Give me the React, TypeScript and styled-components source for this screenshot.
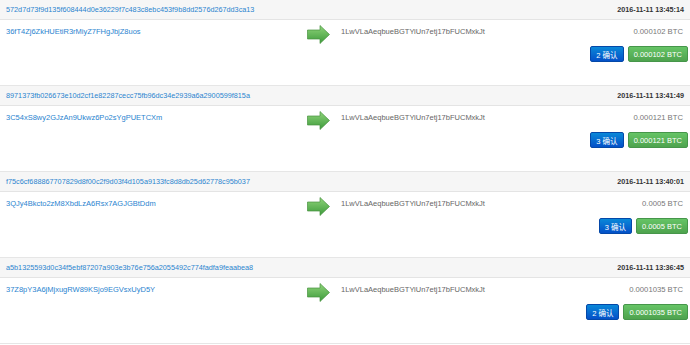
import styled, { createGlobalStyle } from "styled-components";

const GlobalStyle = createGlobalStyle`
  html, body {
    margin: 0;
    padding: 0;
    background: #fff;
    font-family: "Liberation Sans", Arial, "Noto Sans CJK SC", sans-serif;
  }
`;

const List = styled.div`
  width: 690px;
`;

const Tx = styled.div`
  border-bottom: 1px solid #e6e6e6;
`;

const TxHeader = styled.div`
  display: flex;
  justify-content: space-between;
  align-items: center;
  height: 19px;
  padding: 0 6px;
  background: #f6f6f6;
  border-bottom: 1px solid #e4e4e4;
`;

const Hash = styled.a`
  font-size: 7.25px;
  color: #2a84cf;
  text-decoration: none;
`;

const Time = styled.span`
  font-size: 7.2px;
  font-weight: bold;
  color: #333;
`;

const TxBody = styled.div`
  display: grid;
  grid-template-columns: 295px 40px 1fr;
  height: 65px;
  padding: 6px 2px 0 6px;
  box-sizing: border-box;
`;

const Address = styled.a`
  display: block;
  font-size: 7.5px;
  line-height: 12px;
  color: #2a84cf;
  text-decoration: none;
`;

const ArrowCell = styled.div`
  display: flex;
  justify-content: flex-end;
  padding: 0 11px 0 0;
  svg {
    display: block;
    margin-top: -1px;
  }
`;

const Outputs = styled.div`
  display: flex;
  flex-direction: column;
`;

const OutRow = styled.div`
  display: flex;
  justify-content: space-between;
  font-size: 7.5px;
  line-height: 12px;
  padding-right: 5px;
`;

const OutAddress = styled.span`
  color: #666;
`;

const Amount = styled.span`
  font-size: 7.7px;
  color: #777;
`;

const Labels = styled.div`
  display: flex;
  justify-content: flex-end;
  gap: 4px;
  margin-top: 8px;
`;

const Label = styled.span<{ $tone: "blue" | "green" }>`
  display: inline-flex;
  align-items: center;
  height: 16px;
  padding: 0 5px;
  box-sizing: border-box;
  border-radius: 2px;
  font-size: 7.5px;
  color: #fff;
  font-family: "Liberation Sans", Arial, "Noto Sans CJK SC", sans-serif;
  background: ${(p) =>
    p.$tone === "blue"
      ? "linear-gradient(to bottom, #0a88d8, #0450c8)"
      : "linear-gradient(to bottom, #66c466, #4ea34e)"};
  border: 1px solid ${(p) => (p.$tone === "blue" ? "#0448a8" : "#46964a")};
`;

const Arrow = () => (
  <svg width="23" height="19" viewBox="0 0 23 19">
    <defs>
      <linearGradient id="ag" x1="0" y1="0" x2="0" y2="1">
        <stop offset="0" stopColor="#8fd47a" />
        <stop offset="1" stopColor="#3d9a3b" />
      </linearGradient>
    </defs>
    <polygon
      points="0.5,5 13,5 13,0.5 22.5,9.5 13,18.5 13,14 0.5,14"
      fill="url(#ag)"
      stroke="#48923f"
      strokeWidth="0.7"
    />
  </svg>
);

const txs = [
  {
    hash: "572d7d73f9d135f608444d0e36229f7c483c8ebc453f9b8dd2576d267dd3ca13",
    time: "2016-11-11 13:45:14",
    from: "36fT4Zj6ZkHUEtiR3rMiyZ7FHgJbjZ8uos",
    amount: "0.000102 BTC",
    conf: 2,
  },
  {
    hash: "8971373fb026673e10d2cf1e82287cecc75fb96dc34e2939a6a2900599f815a",
    time: "2016-11-11 13:41:49",
    from: "3C54xS8wy2GJzAn9Ukwz6Po2sYgPUETCXm",
    amount: "0.000121 BTC",
    conf: 3,
  },
  {
    hash: "f75c6cf688867707829d8f00c2f9d03f4d105a9133fc8d8db25d62778c95b037",
    time: "2016-11-11 13:40:01",
    from: "3QJy4Bkcto2zM8XbdLzA6Rsx7AGJGBtDdm",
    amount: "0.0005 BTC",
    conf: 3,
  },
  {
    hash: "a5b1325593d0c34f5ebf87207a903e3b76e756a2055492c774fadfa9feaabea8",
    time: "2016-11-11 13:36:45",
    from: "37Z8pY3A6jMjxugRW89KSjo9EGVsxUyD5Y",
    amount: "0.0001035 BTC",
    conf: 2,
  },
];

const TO = "1LwVLaAeqbueBGTYiUn7etj17bFUCMxkJt";

export default function App() {
  return (
    <>
      <GlobalStyle />
      <List>
        {txs.map((tx) => (
          <Tx key={tx.hash}>
            <TxHeader>
              <Hash href="#">{tx.hash}</Hash>
              <Time>{tx.time}</Time>
            </TxHeader>
            <TxBody>
              <div>
                <Address href="#">{tx.from}</Address>
              </div>
              <ArrowCell>
                <Arrow />
              </ArrowCell>
              <Outputs>
                <OutRow>
                  <OutAddress>{TO}</OutAddress>
                  <Amount>{tx.amount}</Amount>
                </OutRow>
                <Labels>
                  <Label $tone="blue">{tx.conf} 确认</Label>
                  <Label $tone="green">{tx.amount}</Label>
                </Labels>
              </Outputs>
            </TxBody>
          </Tx>
        ))}
      </List>
    </>
  );
}
